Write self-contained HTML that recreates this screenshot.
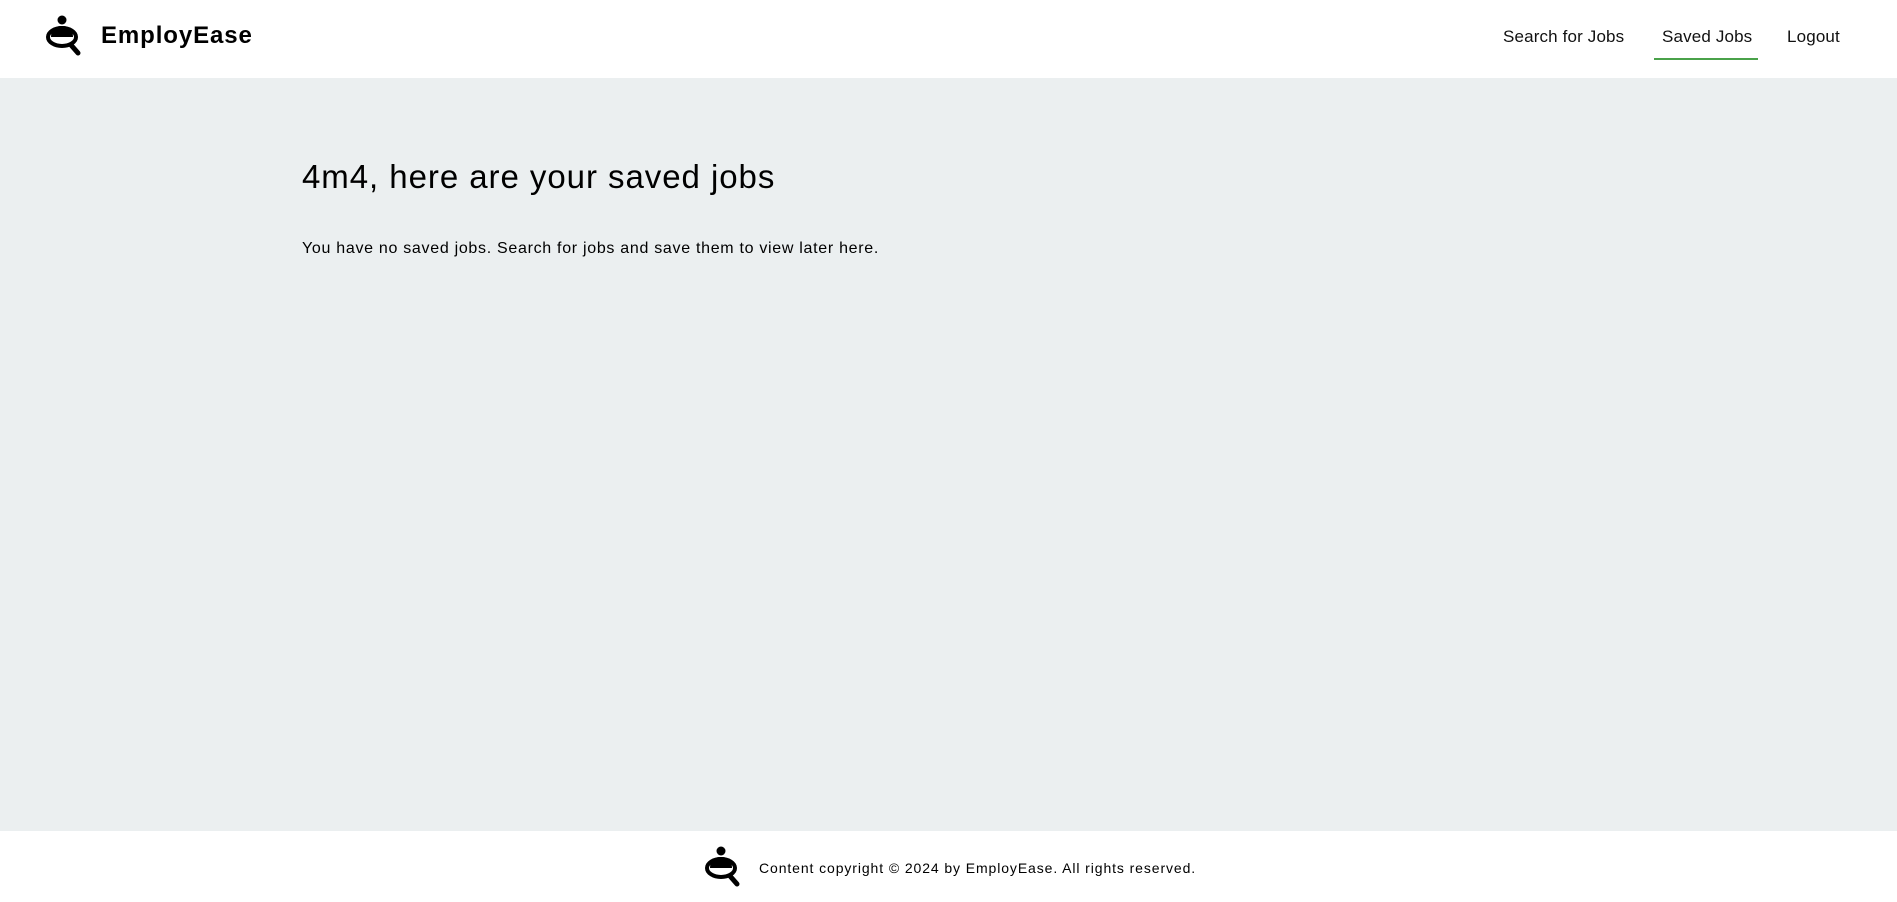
<!DOCTYPE html>
<html><head><meta charset="utf-8"><style>
*{margin:0;padding:0;box-sizing:border-box}
body{width:1897px;height:902px;font-family:"Liberation Sans",sans-serif;background:#ebeff0;color:#000;overflow:hidden;position:relative}
header{position:absolute;left:0;top:0;width:1897px;height:78px;background:#fff}
.logo{position:absolute;left:44px;top:15px}
.brand{position:absolute;left:101px;top:22px;font-size:24px;font-weight:bold;letter-spacing:0.9px}
nav a{position:absolute;top:27px;font-size:17px;color:#111;text-decoration:none;letter-spacing:0.15px}
.ul{position:absolute;left:1654px;top:58px;width:104px;height:2px;background:#4aa24a}
h1{position:absolute;left:302px;top:158px;font-size:33px;font-weight:normal;letter-spacing:0.95px}
p.m{position:absolute;left:302px;top:240px;font-size:16px;letter-spacing:0.7px}
footer{position:absolute;left:0;top:831px;width:1897px;height:71px;background:#fff}
.flogo{position:absolute;left:703px;top:15px}
.ft{position:absolute;left:759px;top:29px;font-size:14px;letter-spacing:0.9px}
</style></head><body>
<header>
<svg class="logo" width="40" height="42" viewBox="0 0 40 42">
<circle cx="18" cy="5" r="4.5" fill="#000"/>
<path d="M7 22 Q7 11 18 11 Q29 11 29 22 Z" fill="#000"/>
<ellipse cx="18" cy="22" rx="14" ry="9" fill="none" stroke="#000" stroke-width="4"/>
<path d="M27 30 L34 38" stroke="#000" stroke-width="5" stroke-linecap="round"/>
</svg>
<div class="brand">EmployEase</div>
<nav><a style="left:1503px">Search for Jobs</a><a style="left:1662px">Saved Jobs</a><a style="left:1787px">Logout</a></nav>
<div class="ul"></div>
</header>
<h1>4m4, here are your saved jobs</h1>
<p class="m">You have no saved jobs. Search for jobs and save them to view later here.</p>
<footer>
<svg class="flogo" width="40" height="42" viewBox="0 0 40 42">
<circle cx="18" cy="5" r="4.5" fill="#000"/>
<path d="M7 22 Q7 11 18 11 Q29 11 29 22 Z" fill="#000"/>
<ellipse cx="18" cy="22" rx="14" ry="9" fill="none" stroke="#000" stroke-width="4"/>
<path d="M27 30 L34 38" stroke="#000" stroke-width="5" stroke-linecap="round"/>
</svg>
<div class="ft">Content copyright © 2024 by EmployEase. All rights reserved.</div>
</footer>
</body></html>
